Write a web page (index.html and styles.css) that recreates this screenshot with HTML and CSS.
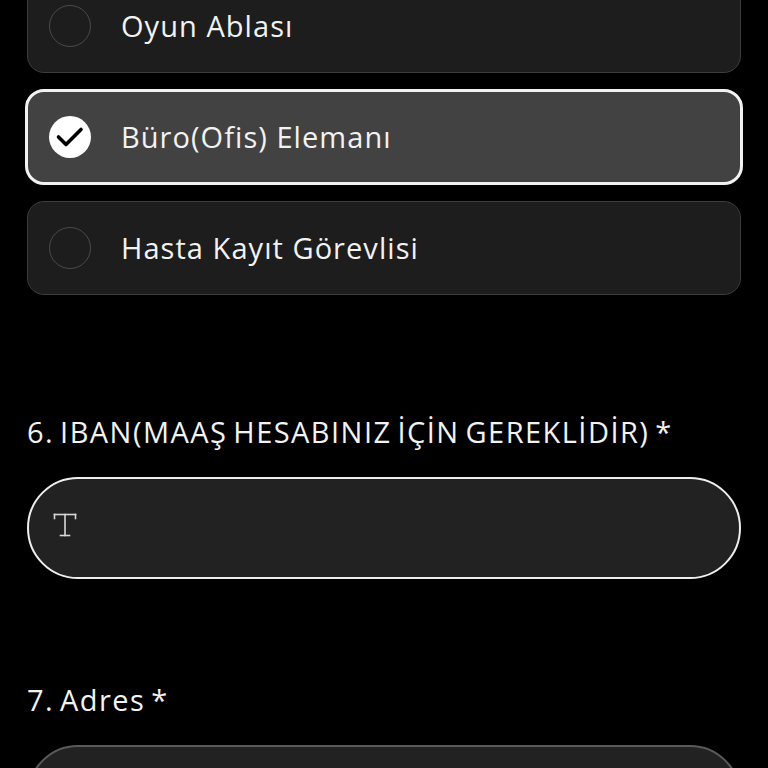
FILE: index.html
```html
<!DOCTYPE html>
<html lang="tr">
<head>
<meta charset="utf-8">
<title>Form</title>
<link rel="stylesheet" href="styles.css">
</head>
<body>
<main class="form">
  <section class="options">
    <div class="option">
      <span class="radio"></span>
      <span class="option-label">Oyun Ablası</span>
    </div>
    <div class="option option-selected">
      <span class="radio radio-checked">
        <svg viewBox="0 0 42 42" width="42" height="42" aria-hidden="true">
          <path d="M9.5 21 L17 28.5 L32 13.5" fill="none" stroke="#000" stroke-width="3.6" stroke-linecap="round" stroke-linejoin="round"/>
        </svg>
      </span>
      <span class="option-label">Büro(Ofis) Elemanı</span>
    </div>
    <div class="option">
      <span class="radio"></span>
      <span class="option-label">Hasta Kayıt Görevlisi</span>
    </div>
  </section>

  <section class="question question-iban">
    <h2 class="question-title">6. IBAN(MAAŞ HESABINIZ İÇİN GEREKLİDİR) *</h2>
    <div class="text-input text-input-focused">
      <svg class="type-icon" viewBox="0 0 24 24" width="24" height="24" aria-hidden="true">
        <g fill="none" stroke="#d8d8d8" stroke-width="1.6" stroke-linecap="square">
          <line x1="1.5" y1="1.5" x2="22.5" y2="1.5"/>
          <line x1="1.5" y1="1.5" x2="1.5" y2="5.5"/>
          <line x1="22.5" y1="1.5" x2="22.5" y2="5.5"/>
          <line x1="12" y1="1.5" x2="12" y2="22.5"/>
          <line x1="7.5" y1="22.5" x2="16.5" y2="22.5"/>
        </g>
      </svg>
    </div>
  </section>

  <section class="question question-address">
    <h2 class="question-title">7. Adres *</h2>
    <div class="text-input"></div>
  </section>
</main>
</body>
</html>
```

FILE: styles.css
```css
html, body {
  margin: 0;
  padding: 0;
  background: #000;
  height: 768px;
  overflow: hidden;
}

body {
  font-family: "Open Sans", "Noto Sans", sans-serif;
  color: #f2f2f2;
}

.form {
  padding: 0 27px;
  margin-top: -21px;
}

.options {
  display: flex;
  flex-direction: column;
  gap: 16px;
}

.option {
  display: flex;
  align-items: center;
  gap: 30px;
  height: 94px;
  box-sizing: border-box;
  padding: 0 21px;
  background: #1d1d1d;
  border: 1px solid #3c3c3c;
  border-radius: 17px;
}

.option-selected {
  height: 96px;
  margin: 0 -2px;
  background: #424242;
  border: 3px solid #f2f2f2;
  border-radius: 19px;
}

.radio {
  flex: 0 0 auto;
  width: 42px;
  height: 42px;
  box-sizing: border-box;
  border-radius: 50%;
  border: 1.5px solid #4a4a4a;
  display: flex;
}

.radio-checked {
  background: #fff;
  border: none;
}

.option-label {
  font-size: 29px;
  line-height: 38px;
  letter-spacing: 1.05px;
  color: #f2f2f2;
}

.question-title {
  margin: 0;
  font-size: 29px;
  line-height: 38px;
  letter-spacing: 1.45px;
  word-spacing: -3px;
  font-weight: 400;
  color: #f2f2f2;
}

.question-iban {
  margin-top: 118px;
}

.question-address {
  margin-top: 102px;
}

.text-input {
  margin-top: 26px;
  height: 102px;
  box-sizing: border-box;
  border: 2px solid #5a5a5a;
  border-radius: 51px;
  background: #222;
  display: flex;
  align-items: center;
  padding: 0 24px;
}

.text-input-focused {
  border-color: #eeeeee;
}

.type-icon {
  display: block;
  margin-top: -6px;
}
```
